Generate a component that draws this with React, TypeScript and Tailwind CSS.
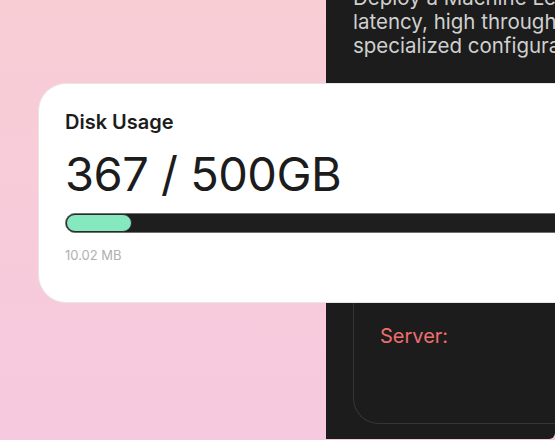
export default function App() {
  return (
    <div className="relative h-[440px] w-[555px] overflow-hidden bg-gradient-to-b from-[#f8cdd4] to-[#f7c9df] font-['Inter',sans-serif]">
      {/* dark panel behind */}
      <div className="absolute left-[326px] top-0 flex h-[439px] w-[229px] flex-col overflow-hidden rounded-br-md bg-[#1c1c1c] pl-[27px]">
        <p className="-mt-[14px] w-[280px] text-[20.5px] leading-[24px] whitespace-nowrap text-[#d0d0d0]">
          Deploy a Machine Learning
          <br />
          latency, high throughput
          <br />
          specialized configuration
        </p>
        <div className="mt-auto mb-[15px] h-[150px] rounded-bl-[26px] border-b border-l border-[#353535] pl-[26px] pt-[50px]">
          <p className="text-[20px] leading-[24px] text-[#ee6e6e]">Server:</p>
        </div>
      </div>

      {/* disk usage card */}
      <div className="absolute left-[38px] top-[83px] h-[220px] w-[560px] rounded-[28px] border border-[#e6e6e6] bg-white pl-[26px] pt-[25px]">
        <h2 className="text-[20px] leading-[26px] font-semibold text-[#1c1c1c]">Disk Usage</h2>
        <p className="mt-[13px] text-[47px] leading-[52px] font-normal tracking-[-0.5px] text-[#1c1c1c]">367 / 500GB</p>
        <div className="mt-[13px] h-[20px] w-full rounded-full border border-[#6f6f6f] bg-[#1e1e1e]">
          <div className="h-full w-[66px] rounded-full border border-[#2a2a2a] bg-[#86e8be]" />
        </div>
        <p className="mt-[14px] text-[13px] leading-[16px] text-[#b0b0b0]">10.02 MB</p>
      </div>
    </div>
  );
}
